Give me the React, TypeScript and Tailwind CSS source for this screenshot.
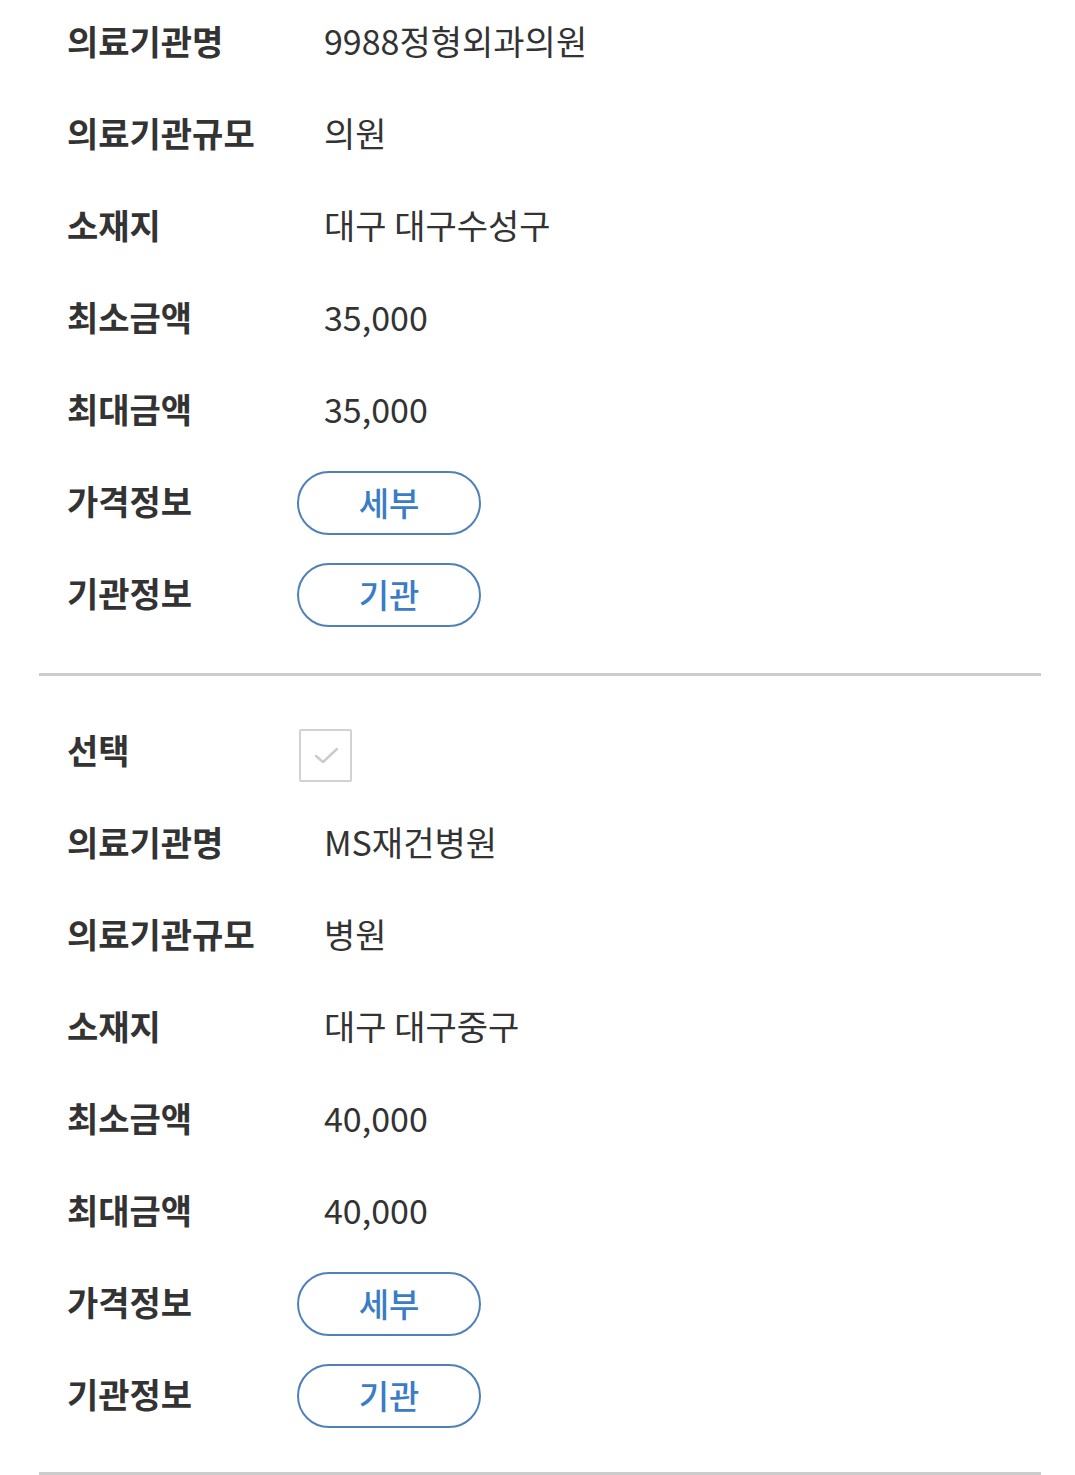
import React from 'react';

type Item = {
  name: string;
  size: string;
  location: string;
  min: string;
  max: string;
};

const items: Item[] = [
  { name: '9988정형외과의원', size: '의원', location: '대구 대구수성구', min: '35,000', max: '35,000' },
  { name: 'MS재건병원', size: '병원', location: '대구 대구중구', min: '40,000', max: '40,000' },
];

const Row: React.FC<{ label: string; children: React.ReactNode }> = ({ label, children }) => {
  return (
    <div className="flex items-center h-[92px]">
      <div className="w-[258px] pl-[28px] text-[34px] font-bold text-[#333333] leading-none">{label}</div>
      <div className="flex-1 flex items-center">{children}</div>
    </div>
  );
};

const Value: React.FC<{ text: string }> = ({ text }) => (
  <span className="pl-[27px] text-[34px] font-normal text-[#333333] leading-none">{text}</span>
);

const PillButton: React.FC<{ text: string }> = ({ text }) => (
  <button className="mt-[3px] w-[184px] h-[64px] rounded-full border-2 border-[#4f80b8] bg-white text-[#3b7cc6] text-[33px] font-medium leading-none flex items-center justify-center">
    {text}
  </button>
);

const CheckBox: React.FC = () => (
  <div className="ml-[2px] mt-[10px] w-[53px] h-[53px] border-2 border-[#d2d2d2] rounded-[2px] flex items-center justify-center bg-white">
    <svg width="32" height="32" viewBox="0 0 32 32" fill="none">
      <path d="M6 17 L13 23 L27 10" stroke="#cccccc" strokeWidth="2.5" strokeLinecap="round" strokeLinejoin="round" />
    </svg>
  </div>
);

const Section: React.FC<{ item: Item; withSelect?: boolean }> = ({ item, withSelect }) => {
  return (
    <div>
      {withSelect && (
        <Row label="선택">
          <CheckBox />
        </Row>
      )}
      <Row label="의료기관명"><Value text={item.name} /></Row>
      <Row label="의료기관규모"><Value text={item.size} /></Row>
      <Row label="소재지"><Value text={item.location} /></Row>
      <Row label="최소금액"><Value text={item.min} /></Row>
      <Row label="최대금액"><Value text={item.max} /></Row>
      <Row label="가격정보"><PillButton text="세부" /></Row>
      <Row label="기관정보"><PillButton text="기관" /></Row>
    </div>
  );
};

const App: React.FC = () => {
  return (
    <div
      className="min-h-screen bg-white overflow-hidden"
      style={{ fontFamily: '"Noto Sans CJK KR", "Noto Sans", sans-serif' }}
    >
      <div className="ml-[39px] mr-[34px] -mt-[5px]">
        <Section item={items[0]} />
        <div className="mt-[34px] mb-[28px] h-[3px] bg-[#cccccc]" />
        <Section item={items[1]} withSelect />
        <div className="mt-[32px] h-[3px] bg-[#cccccc]" />
      </div>
    </div>
  );
};

export default App;
